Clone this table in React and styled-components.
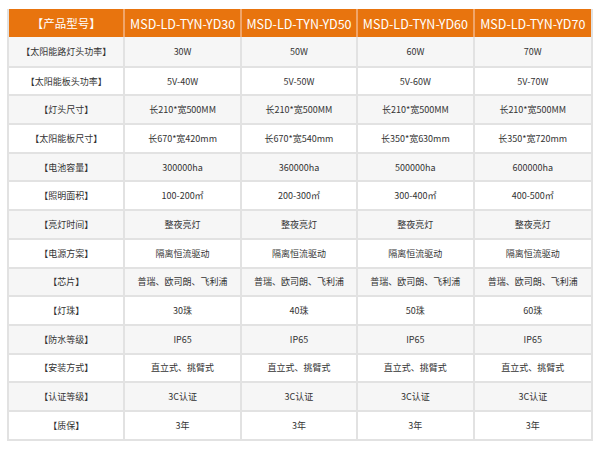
import React from "react";
import styled, { createGlobalStyle } from "styled-components";

const Global = createGlobalStyle`
  html, body { margin: 0; padding: 0; background: #ffffff; }
  body { font-family: "Noto Sans CJK SC", "Liberation Sans", sans-serif; }
`;

const Page = styled.div`
  width: 600px;
  height: 450px;
  padding: 9px 0 0 7px;
  box-sizing: border-box;
  background: #ffffff;
`;

const Frame = styled.div`
  width: 586px;
  box-sizing: border-box;
  border: 2px solid #e2e2e2;
  border-top: none;
`;

const Table = styled.table`
  width: 100%;
  border-collapse: separate;
  border-spacing: 0;
  table-layout: fixed;
`;

const HeadRow = styled.tr`
  height: 28px;
  background: #e8740e;
`;

const HeadCell = styled.th`
  color: #ffffff;
  font-weight: normal;
  font-size: ${(p) => (p.$label ? "11.5px" : "12.5px")};
  text-align: center;
  padding: 0;
  box-sizing: border-box;
  border-right: 2px solid #f0a56a;
  &:last-child { border-right: none; }
  white-space: nowrap;
`;

const Row = styled.tr`
  height: 28.7px;
  background: ${(p) => (p.$alt ? "#f6f6f6" : "#ffffff")};
`;

const Cell = styled.td`
  font-size: 9px;
  color: #333333;
  text-align: center;
  padding: 0;
  box-sizing: border-box;
  border-right: 2px solid #e2e2e2;
  border-top: ${(p) => (p.$first ? "none" : "2px solid #e2e2e2")};
  &:last-child { border-right: none; }
  white-space: nowrap;
`;

const models = ["MSD-LD-TYN-YD30", "MSD-LD-TYN-YD50", "MSD-LD-TYN-YD60", "MSD-LD-TYN-YD70"];

const rows = [
  ["【太阳能路灯头功率】", "30W", "50W", "60W", "70W"],
  ["【太阳能板头功率】", "5V-40W", "5V-50W", "5V-60W", "5V-70W"],
  ["【灯头尺寸】", "长210*宽500MM", "长210*宽500MM", "长210*宽500MM", "长210*宽500MM"],
  ["【太阳能板尺寸】", "长670*宽420mm", "长670*宽540mm", "长350*宽630mm", "长350*宽720mm"],
  ["【电池容量】", "300000ha", "360000ha", "500000ha", "600000ha"],
  ["【照明面积】", "100-200㎡", "200-300㎡", "300-400㎡", "400-500㎡"],
  ["【亮灯时间】", "整夜亮灯", "整夜亮灯", "整夜亮灯", "整夜亮灯"],
  ["【电源方案】", "隔离恒流驱动", "隔离恒流驱动", "隔离恒流驱动", "隔离恒流驱动"],
  ["【芯片】", "普瑞、欧司朗、飞利浦", "普瑞、欧司朗、飞利浦", "普瑞、欧司朗、飞利浦", "普瑞、欧司朗、飞利浦"],
  ["【灯珠】", "30珠", "40珠", "50珠", "60珠"],
  ["【防水等级】", "IP65", "IP65", "IP65", "IP65"],
  ["【安装方式】", "直立式、挑臂式", "直立式、挑臂式", "直立式、挑臂式", "直立式、挑臂式"],
  ["【认证等级】", "3C认证", "3C认证", "3C认证", "3C认证"],
  ["【质保】", "3年", "3年", "3年", "3年"],
];

export default function App() {
  return (
    <Page>
      <Global />
      <Frame>
        <Table>
          <thead>
            <HeadRow>
              <HeadCell $label>【产品型号】</HeadCell>
              {models.map((m) => (
                <HeadCell key={m}>{m}</HeadCell>
              ))}
            </HeadRow>
          </thead>
          <tbody>
            {rows.map((r, i) => (
              <Row key={i} $alt={i % 2 === 0}>
                {r.map((c, j) => (
                  <Cell key={j} $first={i === 0}>{c}</Cell>
                ))}
              </Row>
            ))}
          </tbody>
        </Table>
      </Frame>
    </Page>
  );
}
